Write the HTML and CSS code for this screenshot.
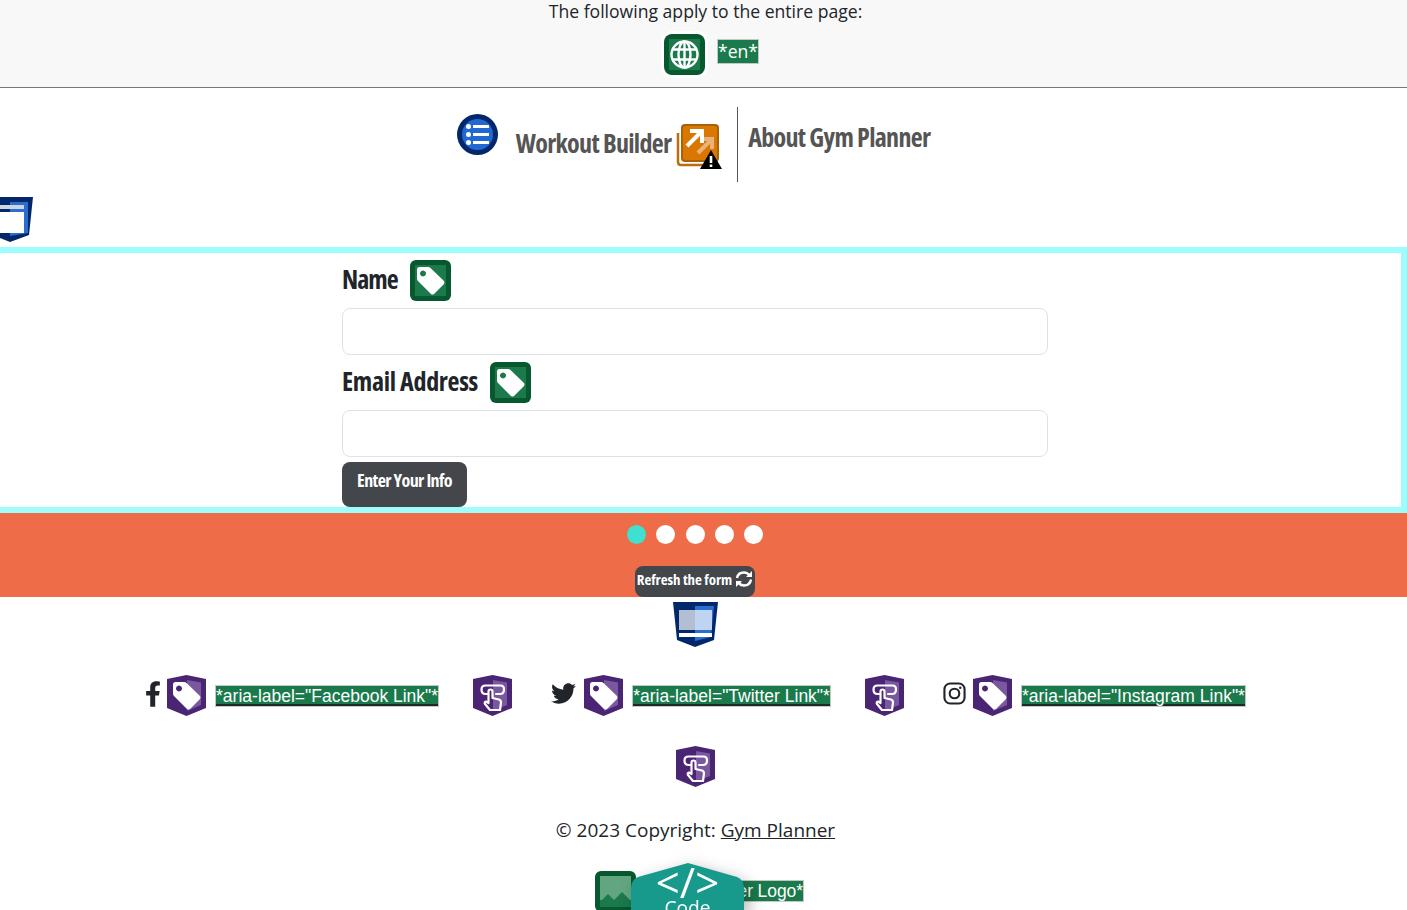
FILE: index.html
```html
<!DOCTYPE html>
<html lang="en">
<head>
    <meta charset="UTF-8">
    <meta name="viewport" content="width=device-width, initial-scale=1.0">
    <title>Gym Planner</title>
    <link rel="stylesheet" href="styles.css">
</head>
<body>
    <!-- Shared icons -->
    <svg class="icon-defs" aria-hidden="true">
        <symbol id="green-box" viewBox="0 0 41 41">
            <rect width="41" height="41" rx="6" fill="#07572f"/>
            <rect x="5" y="5" width="31" height="31" fill="#1a7a4c"/>
        </symbol>
        <symbol id="tag-glyph" viewBox="0 0 41 41">
            <path fill-rule="evenodd" fill="#fff" d="M7 9.500Q7 7 9.500 7H18Q19.500 7 20.500 8L34 21Q35 22.500 34 24L24 34Q22.500 35 21 34L8 21Q7 20 7 18.500ZM13 10.500a3 3 0 1 0 .01 0Z"/>
        </symbol>
        <symbol id="purple-shield" viewBox="0 0 41 41">
            <path fill="#4a2573" d="M1 4L20.500 0L40 4V33L20.500 41L1 33Z"/>
            <path fill="#7a58a0" d="M21 5L35 7.500V30L21 36Z"/>
        </symbol>
        <symbol id="hand-glyph" viewBox="0 0 41 41">
            <g fill="none" stroke="#fff" stroke-width="2.200" stroke-linejoin="round" stroke-linecap="round">
                <path d="M15 19H13.500Q9.500 19 9.500 14.500Q9.500 10.500 13.500 10.500H28.500Q32 10.500 32 14.500Q32 19 28 19H24"/>
                <path d="M16.500 28V16.500Q16.500 14.500 18.500 14.500Q20.500 14.500 20.500 16.500V23L27 24.500Q29 25 29 27.500L28 35H18L13 29Q12 27 14 26.500Z"/>
            </g>
        </symbol>
    </svg>

    <header class="lang-bar">
        <p class="lang-title">The following apply to the entire page:</p>
        <div class="lang-row">
            <svg class="icon globe-icon" viewBox="0 0 41 41">
                <use href="#green-box"/>
                <g fill="none" stroke="#fff" stroke-width="2.400">
                    <circle cx="20.500" cy="20.500" r="13"/>
                    <ellipse cx="20.500" cy="20.500" rx="6" ry="13"/>
                    <path d="M8.500 15.500H32.500M8.500 25.500H32.500M20.500 7.500V33.500"/>
                </g>
            </svg>
            <span class="chip">*en*</span>
        </div>
    </header>

    <nav class="main-nav">
        <svg class="icon menu-icon" viewBox="0 0 41 41">
            <circle cx="20.500" cy="20.500" r="20.500" fill="#03276b"/>
            <circle cx="20.500" cy="20.500" r="15.500" fill="#2169d0"/>
            <g fill="#fff">
                <circle cx="11.500" cy="12.500" r="2.500"/>
                <circle cx="11.500" cy="20.500" r="2.500"/>
                <circle cx="11.500" cy="28.500" r="2.500"/>
                <rect x="16" y="11" width="16" height="3"/>
                <rect x="16" y="19" width="16" height="3"/>
                <rect x="16" y="27" width="16" height="3"/>
            </g>
        </svg>
        <a class="nav-link nav-builder" href="#">Workout Builder</a>
        <svg class="icon popout-icon" viewBox="0 0 46 46">
            <path fill="none" stroke="#bb6c0c" stroke-width="2.500" d="M2 9V38Q2 41 5 41H32"/>
            <rect x="6" y="1" width="36" height="36" rx="3" fill="#d97700" stroke="#a8620b" stroke-width="2"/>
            <g fill="none" stroke-width="4">
                <path stroke="#e9b27a" d="M22 29L35 16M26 15H36V25"/>
                <path stroke="#fff" d="M11 22L24 9M14 7H26V19"/>
            </g>
            <path d="M35 26L46 45H24Z" fill="#000"/>
            <path d="M35 32V39M35 40.500V43" stroke="#fff" stroke-width="2.600" fill="none"/>
        </svg>
        <span class="nav-divider"></span>
        <a class="nav-link nav-about" href="#">About Gym Planner</a>
    </nav>

    <svg class="icon window-icon" viewBox="0 0 45 45">
        <path fill="#03276b" d="M0 0H45L41 38L22 45L4 38Z"/>
        <path fill="#2a6fd0" d="M22 5H40V36L22 39Z"/>
        <rect x="4" y="8" width="32" height="4" fill="#ccd6e2"/>
        <rect x="4" y="15" width="32" height="21" fill="#fff"/>
    </svg>

    <section class="form-panel">
        <form class="info-form">
            <div class="label-row">
                <label class="field-label label-short" for="name">Name</label>
                <svg class="icon" viewBox="0 0 41 41"><use href="#green-box"/><use href="#tag-glyph"/></svg>
            </div>
            <input class="field-input" id="name" type="text">
            <div class="label-row">
                <label class="field-label" for="email">Email Address</label>
                <svg class="icon" viewBox="0 0 41 41"><use href="#green-box"/><use href="#tag-glyph"/></svg>
            </div>
            <input class="field-input" id="email" type="text">
            <button class="enter-btn" type="button">Enter Your Info</button>
        </form>
    </section>

    <section class="steps-band">
        <div class="dots">
            <span class="dot dot-active"></span>
            <span class="dot"></span>
            <span class="dot"></span>
            <span class="dot"></span>
            <span class="dot"></span>
        </div>
        <button class="refresh-btn" type="button">Refresh the form
            <svg class="refresh-icon" viewBox="0 0 18 18" fill="none" stroke="#fff" stroke-width="2.400">
                <path d="M2 8Q3 2.500 9 2.500Q12.500 2.500 14.500 5.500"/>
                <path d="M16 9.500Q15 15.500 9 15.500Q5.500 15.500 3.500 12.500"/>
                <path d="M17 1V7H11Z M1 17V11H7Z" fill="#fff" stroke="none"/>
            </svg>
        </button>
    </section>

    <footer class="page-footer">
        <svg class="section-icon" viewBox="0 0 45 45">
            <path fill="#03276b" d="M0 0H45L41 38L22 45L4 38Z"/>
            <path fill="#2a6fd0" d="M22 4H41L38 35L22 39Z"/>
            <rect x="6" y="8" width="33" height="20" fill="#fff" opacity=".7"/>
            <rect x="6" y="31" width="33" height="4" fill="#fff"/>
        </svg>

        <div class="social-row">
            <svg class="social-glyph glyph-f" viewBox="0 0 320 512" fill="#212529"><path d="M279.140 288l14.220-92.660h-88.910v-60.130c0-25.350 12.420-50.060 52.240-50.060h40.420V6.260S260.430 0 225.360 0c-73.220 0-121.080 44.380-121.080 124.720v70.620H22.890V288h81.390v224h100.170V288z"/></svg>
            <svg class="icon" viewBox="0 0 41 41"><use href="#purple-shield"/><use href="#tag-glyph"/></svg>
            <a class="chip chip-link" href="#">*aria-label="Facebook Link"*</a>
            <svg class="icon hand-icon" viewBox="0 0 41 41"><use href="#purple-shield"/><use href="#hand-glyph"/></svg>

            <svg class="social-glyph glyph-bird" viewBox="0 0 512 512" fill="#212529"><path d="M459.370 151.716c.325 4.548.325 9.097.325 13.645 0 138.720-105.583 298.558-298.558 298.558-59.452 0-114.680-17.219-161.137-47.106 8.447.974 16.568 1.299 25.340 1.299 49.055 0 94.213-16.568 130.274-44.832-46.132-.975-84.792-31.188-98.112-72.772 6.498.974 12.995 1.624 19.818 1.624 9.421 0 18.843-1.300 27.614-3.573-48.081-9.747-84.143-51.980-84.143-102.985v-1.299c13.969 7.797 30.214 12.670 47.431 13.319-28.264-18.843-46.781-51.005-46.781-87.391 0-19.492 5.197-37.360 14.294-52.954 51.655 63.675 129.300 105.258 216.365 109.807-1.624-7.797-2.599-15.918-2.599-24.040 0-57.828 46.782-104.934 104.934-104.934 30.213 0 57.502 12.670 76.670 33.137 23.715-4.548 46.456-13.320 66.599-25.340-7.798 24.366-24.366 44.833-46.132 57.827 21.117-2.273 41.584-8.122 60.426-16.243-14.292 20.791-32.161 39.308-52.628 54.253z"/></svg>
            <svg class="icon" viewBox="0 0 41 41"><use href="#purple-shield"/><use href="#tag-glyph"/></svg>
            <a class="chip chip-link" href="#">*aria-label="Twitter Link"*</a>
            <svg class="icon hand-icon" viewBox="0 0 41 41"><use href="#purple-shield"/><use href="#hand-glyph"/></svg>

            <svg class="social-glyph glyph-insta" viewBox="0 0 24 24" fill="none" stroke="#212529" stroke-width="2.200">
                <rect x="1.500" y="1.500" width="21" height="21" rx="6"/>
                <circle cx="12" cy="12" r="5"/>
                <circle cx="18" cy="6" r="1.300" fill="#212529" stroke="none"/>
            </svg>
            <svg class="icon" viewBox="0 0 41 41"><use href="#purple-shield"/><use href="#tag-glyph"/></svg>
            <a class="chip chip-link" href="#">*aria-label="Instagram Link"*</a>
        </div>

        <svg class="icon lone-hand" viewBox="0 0 41 41"><use href="#purple-shield"/><use href="#hand-glyph"/></svg>

        <p class="copyright">© 2023 Copyright: <a href="#">Gym Planner</a></p>

        <div class="logo-row">
            <svg class="icon" viewBox="0 0 41 41">
                <use href="#green-box"/>
                <rect x="5" y="5" width="31" height="24" fill="#62a681"/>
                <path fill="#1a7a4c" d="M5 31L13 23L19 29L27 21L36 30V36H5Z"/>
            </svg>
            <span class="chip">*Gym Planner Logo*</span>
        </div>
    </footer>

    <a class="code-badge" href="#">
        <svg class="code-shape" viewBox="0 0 113 47">
            <path fill="#179a8c" d="M57 0L106 14Q113 17 113 25V47H0V25Q0 17 7 14Z"/>
        </svg>
        <span class="code-mark">&lt;/&gt;</span>
        <span class="code-text">Code</span>
    </a>
</body>
</html>
```

FILE: styles.css
```css
/* Page */
html, body {
    height: 100%;
}

body {
    margin: 0;
    overflow: hidden;
    font-family: "Open Sans", sans-serif;
    color: #212529;
    background-color: #fff;
}

a {
    color: inherit;
}

.icon-defs {
    display: none;
}

.icon {
    display: block;
    flex: none;
    width: 41px;
    height: 41px;
}

/* Chips round the untranslated text */
.chip {
    display: block;
    flex: none;
    border: 1px solid #c3c8c5;
    background-color: #1a7a4c;
    color: #fff;
    font-family: "Liberation Sans", sans-serif;
    font-size: 17.500px;
    line-height: 20px;
    white-space: nowrap;
}

.chip-link {
    text-decoration: none;
    box-shadow: inset 0 -2px 0 #1d2a26;
}

/* Language bar */
.lang-bar {
    height: 87px;
    border-bottom: 1px solid #777;
    background-color: #f8f8f8;
}

.lang-title {
    margin: 0;
    padding-left: 4px;
    font-size: 17.600px;
    line-height: 22px;
    text-align: center;
}

.lang-row {
    display: flex;
    justify-content: center;
    align-items: flex-start;
    gap: 12px;
    padding: 12px 0 0 16px;
}

.lang-row .chip {
    margin-top: 5px;
    font-family: "Open Sans", sans-serif;
    font-size: 17.600px;
    line-height: 23px;
}

.globe-icon {
    border-radius: 8px;
    box-shadow: 0 0 0 3px #fff;
}

/* Main navigation */
.main-nav {
    display: flex;
    justify-content: center;
    align-items: flex-start;
    height: 75px;
    padding: 19px 20px 0 0;
}

.menu-icon {
    margin-top: 7px;
    margin-right: 18px;
}

.nav-link {
    font-family: "Open Sans", sans-serif;
    font-stretch: 75%;
    font-size: 26px;
    font-weight: 700;
    line-height: 32px;
    letter-spacing: -0.700px;
    color: #555;
    text-decoration: none;
    white-space: nowrap;
}

.nav-builder {
    margin-top: 20px;
}

.nav-about {
    margin-top: 14px;
}

.popout-icon {
    width: 46px;
    height: 46px;
    margin: 17px 15px 0 5px;
}

.nav-divider {
    flex: none;
    width: 1px;
    height: 75px;
    margin-right: 10px;
    background-color: #555;
}

.window-icon {
    width: 45px;
    height: 45px;
    margin: 15px 0 5px -12px;
}

/* Form panel */
.form-panel {
    margin-left: -10px;
    border: 6px solid #9ffcfd;
    padding-top: 7px;
}

.info-form {
    display: flex;
    flex-direction: column;
    align-items: flex-start;
    width: 706px;
    margin-left: 346px;
}

.label-row {
    display: flex;
    align-items: center;
    gap: 12px;
    margin-bottom: 7px;
}

.field-label {
    margin-bottom: 4px;
    font-family: "Open Sans", sans-serif;
    font-stretch: 75%;
    font-size: 26px;
    font-weight: 700;
    line-height: 32px;
    letter-spacing: -0.300px;
}

.label-short {
    letter-spacing: -1px;
}

.field-input {
    box-sizing: border-box;
    width: 100%;
    height: 47px;
    margin-bottom: 7px;
    border: 1px solid #dee2e6;
    border-radius: 8px;
    background-color: #fff;
}

.field-input:last-of-type {
    margin-bottom: 5px;
}

.enter-btn,
.refresh-btn {
    border: none;
    border-radius: 8px;
    background-color: #43464b;
    color: #fff;
    font-family: "Open Sans", sans-serif;
    font-stretch: 75%;
    font-weight: 700;
    white-space: nowrap;
}

.enter-btn {
    width: 125px;
    height: 45px;
    padding: 0 0 9px;
    font-size: 18px;
    letter-spacing: -0.600px;
}

/* Step dots and refresh */
.steps-band {
    display: flex;
    flex-direction: column;
    align-items: center;
    height: 84px;
    padding-right: 17px;
    background-color: #ee6c48;
}

.dots {
    display: flex;
    gap: 10.250px;
    padding-top: 12px;
}

.dot {
    width: 19px;
    height: 19px;
    border-radius: 50%;
    background-color: #fff;
}

.dot-active {
    background-color: #40e0d0;
}

.refresh-btn {
    display: flex;
    align-items: center;
    justify-content: center;
    gap: 3px;
    width: 120px;
    height: 31px;
    margin-top: 22px;
    padding: 0 0 6px;
    font-size: 15px;
    letter-spacing: -0.100px;
}

.refresh-icon {
    width: 18px;
    height: 18px;
}

/* Footer */
.page-footer {
    display: flex;
    flex-direction: column;
    align-items: center;
    padding-right: 16px;
}

.section-icon {
    display: block;
    width: 45px;
    height: 45px;
    margin-top: 5px;
}

.social-row {
    display: flex;
    align-items: center;
    margin-top: 28px;
}

.social-row .chip {
    margin: 1px 0 0 8px;
}

.social-glyph {
    display: block;
    flex: none;
    margin-bottom: 4px;
}

.glyph-f {
    width: 16px;
    height: 26px;
    margin-right: 5px;
}

.glyph-bird {
    width: 25px;
    height: 25px;
    margin-right: 7px;
}

.glyph-insta {
    width: 23px;
    height: 23px;
    margin-right: 6px;
}

.hand-icon {
    margin: 0 38px 0 33px;
}

.lone-hand {
    margin-top: 30px;
}

.copyright {
    margin: 28px 0 0;
    font-size: 19px;
    line-height: 30px;
}

.logo-row {
    display: flex;
    align-items: flex-start;
    gap: 8px;
    margin: 26px 0 0 8px;
}

.logo-row .chip {
    margin-top: 9px;
    letter-spacing: -0.100px;
}

/* Floating code badge */
.code-badge {
    position: fixed;
    left: 631px;
    bottom: 0;
    display: flex;
    flex-direction: column;
    align-items: center;
    width: 113px;
    height: 47px;
    color: #fff;
    text-decoration: none;
}

.code-shape {
    position: absolute;
    left: 0;
    top: 0;
    width: 113px;
    height: 47px;
    filter: drop-shadow(5px 5px 8px rgba(0, 0, 0, 0.3));
}

.code-mark {
    position: relative;
    font-size: 42px;
    line-height: 38px;
}

.code-text {
    position: relative;
    font-size: 19.200px;
    line-height: 22px;
    margin-top: -4px;
}
```
